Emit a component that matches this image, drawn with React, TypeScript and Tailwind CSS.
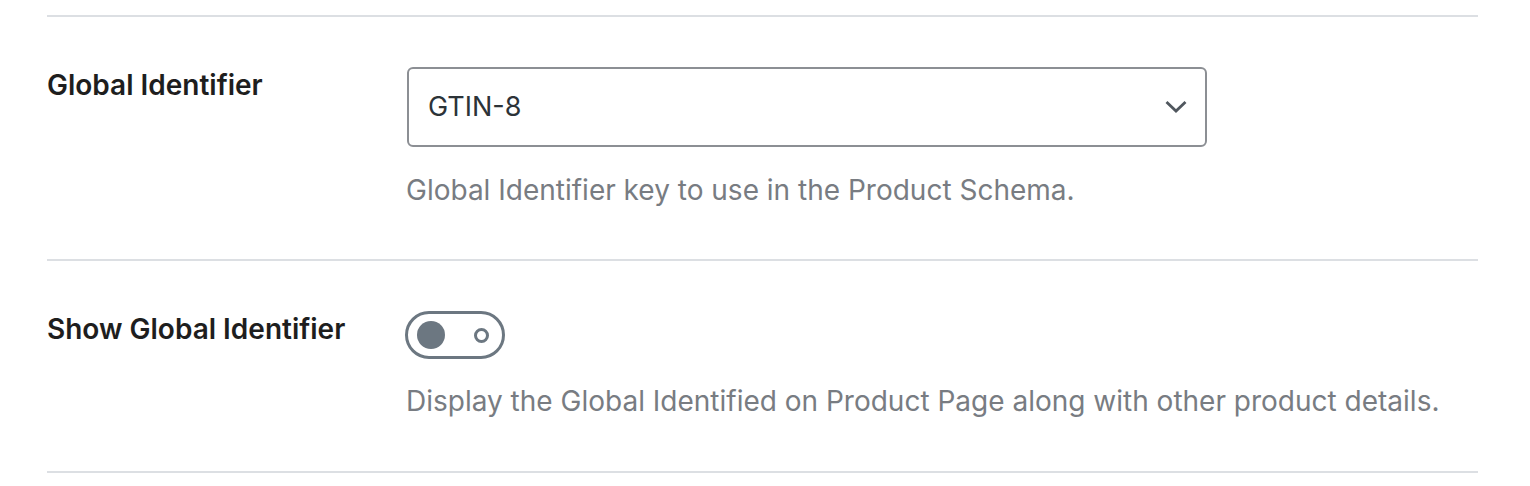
import { useState } from 'react';

function Chevron() {
  return (
    <svg width="22" height="14" viewBox="0 0 22 14" fill="none" className="text-[#50575e]">
      <path d="M1.5 2l9.5 9 9.5-9" stroke="currentColor" strokeWidth="2.8" />
    </svg>
  );
}

function Toggle({ on, onChange }: { on: boolean; onChange: () => void }) {
  return (
    <button
      type="button"
      onClick={onChange}
      aria-pressed={on}
      className="flex h-[48px] w-[100px] items-center justify-between rounded-full border-[3px] border-[#6c7781] pl-[9px] pr-[13px]"
    >
      <span className="h-[28px] w-[28px] rounded-full bg-[#6c7781]" />
      <span className="h-[15px] w-[15px] rounded-full border-[3px] border-[#6c7781]" />
    </button>
  );
}

export default function App() {
  const [show, setShow] = useState(false);

  return (
    <main className="min-h-[486px] bg-white pl-[47px] pr-[52px] pt-[15px] font-['Inter',sans-serif] text-[#1e1e1e]">
      <div className="border-y-2 border-[#dcdfe3]">
        {/* Global identifier */}
        <section className="flex pb-[51px] pt-[50px]">
          <label className="w-[360px] text-[28px] font-semibold leading-[36px]">Global Identifier</label>
          <div>
            <div className="flex h-[80px] w-[800px] items-center justify-between rounded-[6px] border-2 border-[#8c8f94] pl-[19px] pr-[18px]">
              <span className="text-[27px] text-[#2c3338]">GTIN-8</span>
              <Chevron />
            </div>
            <p className="mt-[25px] -ml-px text-[28px] leading-[36px] text-[#787c82]">
              Global Identifier key to use in the Product Schema.
            </p>
          </div>
        </section>

        {/* Show on product page */}
        <section className="flex border-t-2 border-[#dcdfe3] pb-[52px] pt-[50px]">
          <label className="w-[358px] text-[28px] font-semibold leading-[36px]">Show Global Identifier</label>
          <div>
            <Toggle on={show} onChange={() => setShow(!show)} />
            <p className="mt-[24px] ml-px text-[28px] leading-[36px] text-[#787c82]">
              Display the Global Identified on Product Page along with other product details.
            </p>
          </div>
        </section>
      </div>
    </main>
  );
}
